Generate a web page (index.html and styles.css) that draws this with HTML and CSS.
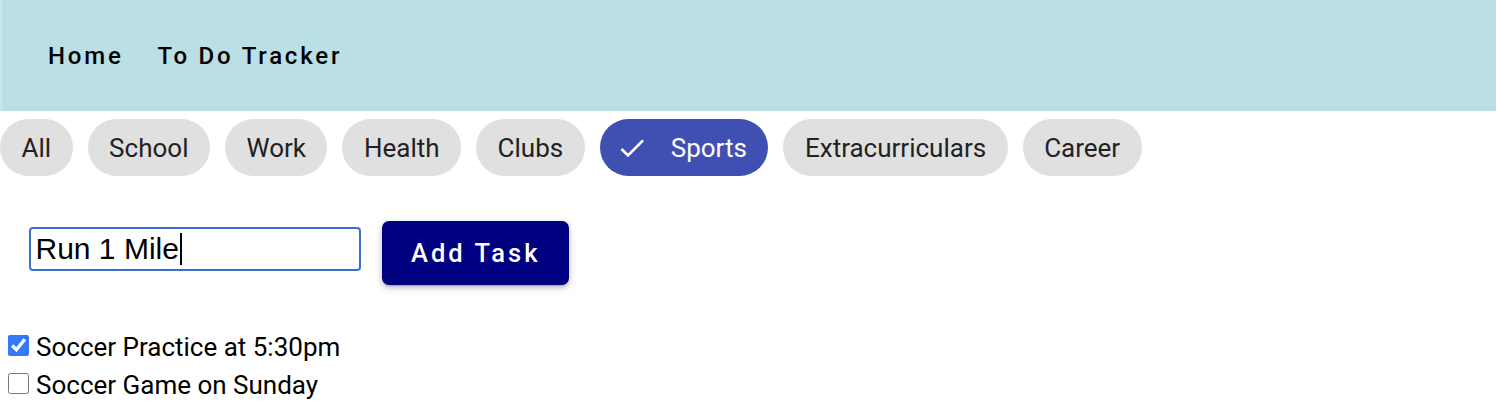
FILE: index.html
```html
<!DOCTYPE html>
<html lang="en">
<head>
	<meta charset="UTF-8">
	<title>To Do Tracker</title>
	<link rel="stylesheet" href="styles.css">
</head>
<body>
<header class="toolbar">
	<a class="nav-link" href="#">Home</a>
	<a class="nav-link" href="#">To Do Tracker</a>
</header>

<div class="chips">
	<span class="chip">All</span>
	<span class="chip">School</span>
	<span class="chip">Work</span>
	<span class="chip">Health</span>
	<span class="chip">Clubs</span>
	<span class="chip selected">
		<svg class="check" viewBox="0 0 24 24"><polyline points="4.1,12.7 9,17.6 20.3,6.3"/></svg>
		Sports
	</span>
	<span class="chip">Extracurriculars</span>
	<span class="chip">Career</span>
</div>

<form class="task-form">
	<div class="field">
		<input type="text" id="task" value="Run 1 Mile">
		<span class="caret"></span>
	</div>
	<button type="button" class="add-btn">Add Task</button>
</form>

<ul class="tasks">
	<li><input type="checkbox" checked><label>Soccer Practice at 5:30pm</label></li>
	<li><input type="checkbox"><label>Soccer Game on Sunday</label></li>
</ul>
</body>
</html>
```

FILE: styles.css
```css
body,ul{
	margin:0;
	padding:0;
}
body{
	font-family: Roboto, "Liberation Sans", sans-serif;
	background:#fff;
}
.toolbar{
	height:111px;
	background:#badfe5;
	border-left:2px solid #c9e7eb;
	box-sizing:border-box;
	display:flex;
	align-items:center;
	gap:34px;
	padding-left:46px;
}
.nav-link{
	color:#000;
	text-decoration:none;
	font-size:24px;
	font-weight:500;
	letter-spacing:2.8px;
}
.chips{
	margin-top:8px;
	display:flex;
	gap:15px;
}
.chip{
	display:flex;
	align-items:center;
	height:57px;
	padding:0 21.5px;
	border-radius:29px;
	background:#e0e0e0;
	color:#222;
	font-size:26px;
}
.chip.selected{
	background:#4050b2;
	color:#fff;
	padding-left:16px;
}
.check{
	width:32px;
	height:32px;
	margin-right:23px;
	fill:none;
	stroke:#fff;
	stroke-width:2;
}
.task-form{
	display:flex;
	align-items:flex-start;
	gap:21px;
	margin:45px 0 0 29px;
}
.field{
	position:relative;
	margin-top:6px;
}
.field input{
	display:block;
	width:332px;
	height:44px;
	box-sizing:border-box;
	border:2.5px solid #3a6fd2;
	border-radius:4px;
	outline:none;
	padding:0 4.5px;
	font-family:"Liberation Sans", Arial, sans-serif;
	font-size:30px;
	color:#000;
}
.caret{
	position:absolute;
	left:151px;
	top:6px;
	width:2px;
	height:32px;
	background:#000;
}
.add-btn{
	height:64px;
	padding:0 29px;
	border:none;
	border-radius:7px;
	background:#000080;
	color:#fff;
	font-family:Roboto, sans-serif;
	font-size:25.5px;
	font-weight:500;
	letter-spacing:3px;
	box-shadow:0 3px 2px -2px rgba(0,0,0,.2), 0 3px 5px 0 rgba(0,0,0,.16), 0 2px 10px 0 rgba(0,0,0,.12);
}
.tasks{
	margin-top:43px;
}
.tasks li{
	list-style:none;
	font-family:Roboto, "Liberation Sans", sans-serif;
	font-size:26px;
	line-height:38px;
	height:38px;
}
.tasks input{
	width:21px;
	height:21px;
	margin:3px 7px 2px 8px;
	accent-color:#3478f6;
}
```
